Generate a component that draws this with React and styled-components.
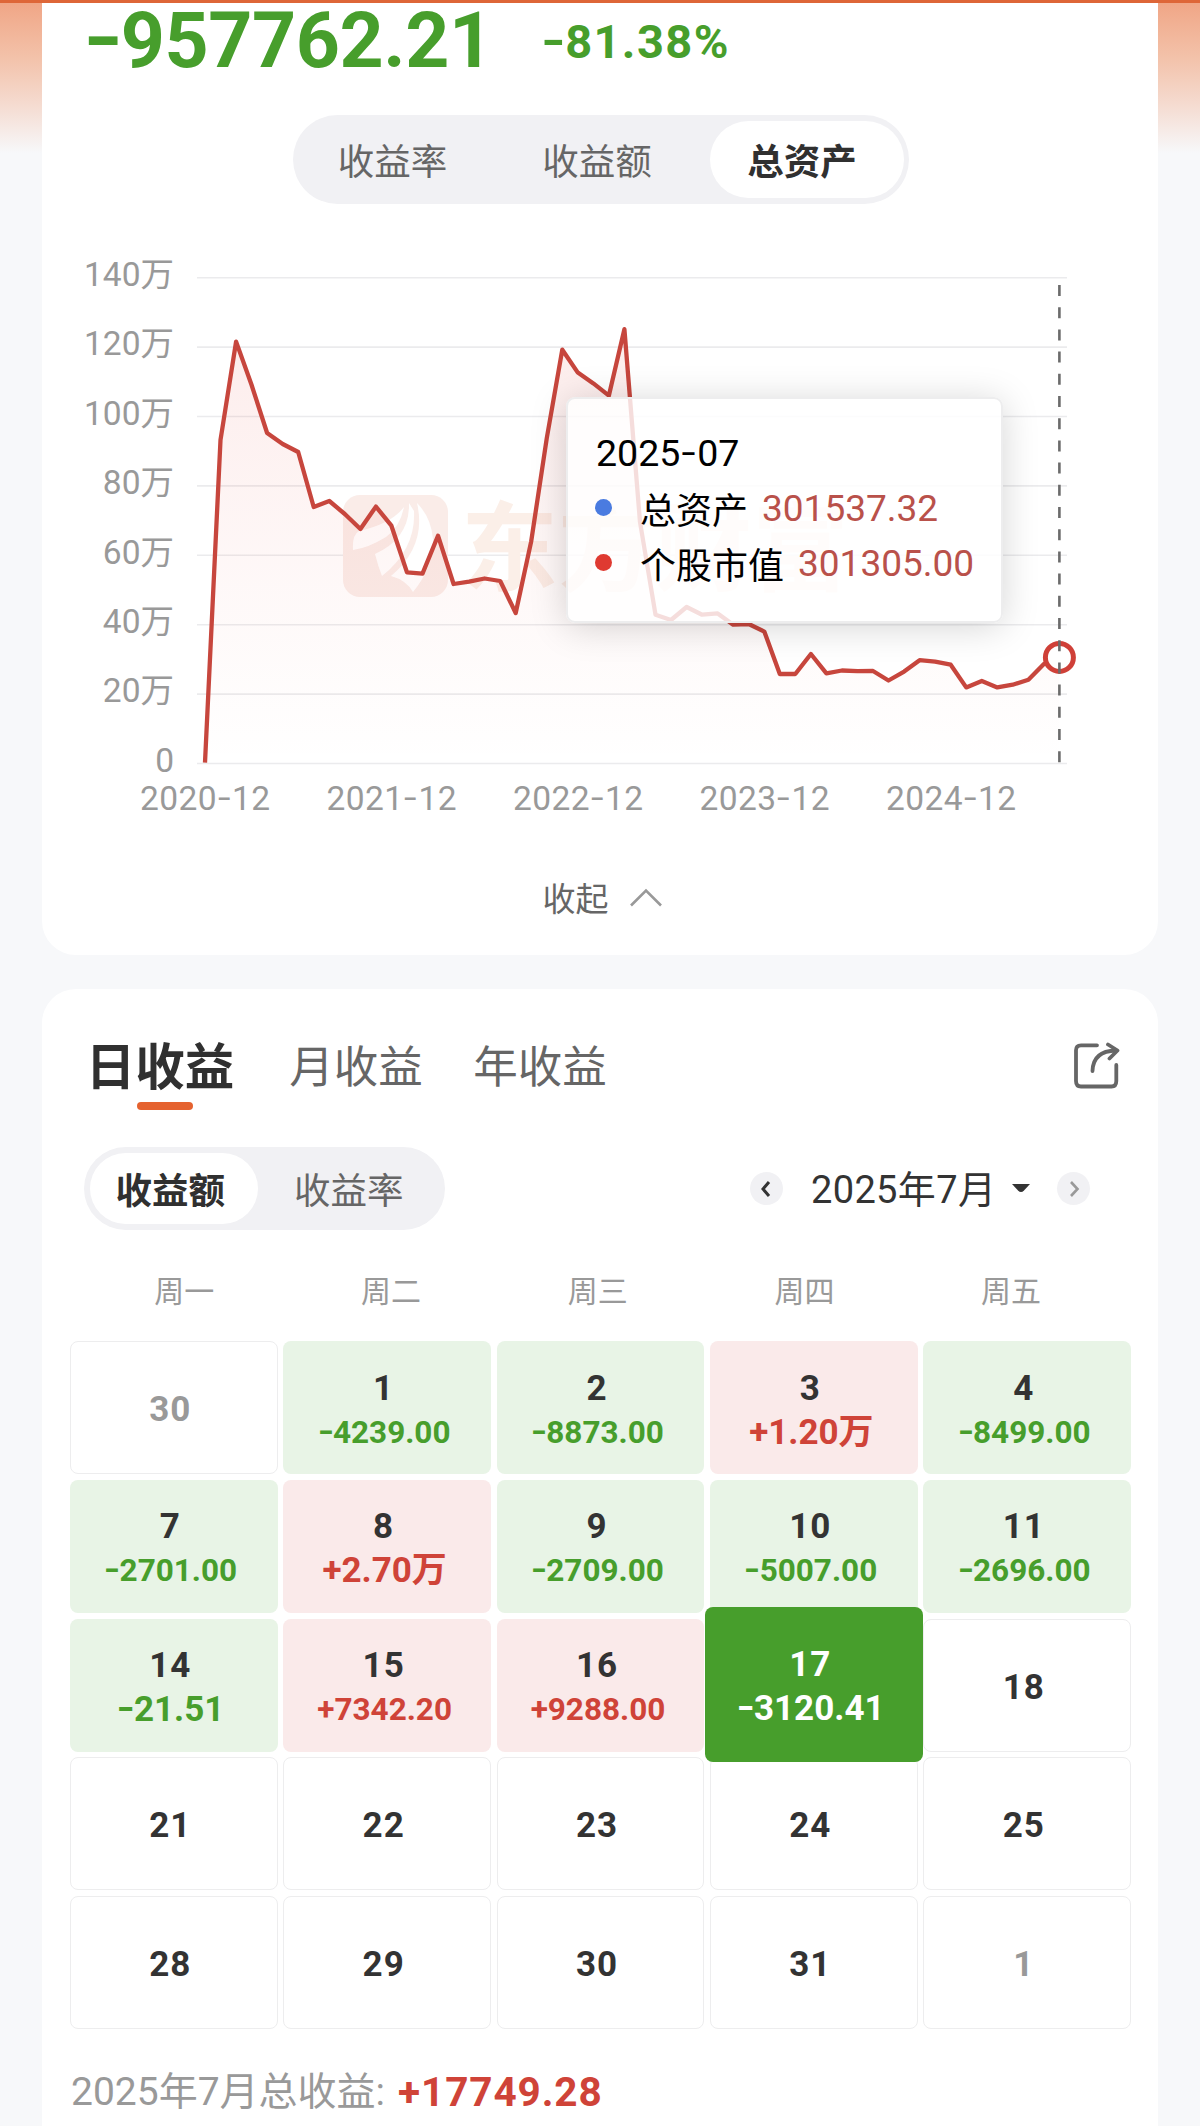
import React from "react";
import styled, { createGlobalStyle } from "styled-components";

const GlobalStyle = createGlobalStyle`
  * { box-sizing: border-box; }
  body {
    margin: 0;
    background: #f7f8fa;
    font-family: Roboto, "Noto Sans CJK SC", sans-serif;
    color: #333;
  }
`;

const GREEN = "#479e2c";
const RED = "#cf4338";

const Page = styled.div`
  display: flex;
  flex-direction: column;
  gap: 34px;
  height: 2126px;
  padding: 0 42px;
  overflow: hidden;
  border-top: 3px solid #de6638;
  background: linear-gradient(#f0a686, #f3c2aa 55px, #f5ddd3 105px, #f7f8fa 150px);
`;

const SummaryCard = styled.section`
  position: relative;
  flex: none;
  display: flex;
  flex-direction: column;
  align-items: center;
  height: 952px;
  background: #fff;
  border-radius: 0 0 34px 34px;
`;

const Totals = styled.div`
  align-self: stretch;
  display: flex;
  height: 76px;
  padding-left: 44px;
  gap: 57px;
  color: ${GREEN};
  font-weight: 700;
  white-space: nowrap;
`;

const TotalAmount = styled.div`
  width: 401px;
  font-size: 77px;
  line-height: 77px;
  letter-spacing: -0.4px;
`;

const TotalRate = styled.div`
  font-size: 47px;
  line-height: 78px;
  letter-spacing: 1.4px;
`;

const DashGlyph = styled.span`
  display: inline-block;
  width: 0.45em;
  text-align: center;
  transform: translateY(-0.02em) scaleX(1.35);
`;

function Num({ children }) {
  return String(children)
    .split(/(-)/)
    .map((part, i) => (part === "-" ? <DashGlyph key={i}>-</DashGlyph> : part));
}

const Segment = styled.div`
  display: flex;
  width: ${(p) => p.$width}px;
  height: ${(p) => p.$height}px;
  padding: 6px 5px 6px 6px;
  background: #f1f1f4;
  border-radius: 50px;
`;

const SegmentItem = styled.div`
  width: ${(p) => p.$width}px;
  display: flex;
  align-items: center;
  justify-content: center;
  padding-right: ${(p) => p.$shift || 0}px;
  padding-bottom: 1px;
  border-radius: 50px;
  font-size: 36.5px;
  color: ${(p) => (p.$active ? "#303030" : "#666")};
  font-weight: ${(p) => (p.$active ? 700 : 400)};
  background: ${(p) => (p.$active ? "#fff" : "transparent")};
`;

const RangeSegment = styled(Segment)`
  margin: 36px 0 0 2px;
`;

const ChartArea = styled.div`
  position: relative;
  flex: none;
  width: 1116px;
  height: 600px;
  margin-top: 37px;
`;

const ChartSvg = styled.svg`
  display: block;
  font-family: Roboto, "Noto Sans CJK SC", sans-serif;
`;

const AxisDates = styled.div`
  display: flex;
  padding-left: 70px;
  margin-top: -1px;
  color: #999;
  font-size: 33.5px;
  letter-spacing: 0.4px;
  line-height: 38px;
`;

const AxisDate = styled.span`
  flex: none;
  width: 186.5px;
  text-align: center;
`;

const Tooltip = styled.div`
  position: absolute;
  left: 524px;
  top: 156px;
  width: 437px;
  height: 226px;
  display: flex;
  flex-direction: column;
  padding: 27px 0 0 28px;
  border: 2px solid #ededee;
  border-radius: 9px;
  background: rgba(255, 255, 255, 0.82);
  box-shadow: 0 4px 36px rgba(0, 0, 0, 0.17);
  color: #000;
  white-space: nowrap;
`;

const TooltipTitle = styled.div`
  font-size: 37.5px;
  line-height: 54px;
`;

const TooltipRow = styled.div`
  display: flex;
  align-items: center;
  height: 55px;
  font-size: 36px;
`;

const Dot = styled.span`
  width: 17px;
  height: 17px;
  margin-left: -1px;
  margin-right: 28px;
  border-radius: 50%;
  background: ${(p) => p.$color};
`;

const TooltipValue = styled.span`
  margin-left: 14px;
  padding-top: 2px;
  font-size: 37px;
  color: #b9514a;
`;

const Collapse = styled.div`
  display: flex;
  align-items: center;
  gap: 20px;
  margin-top: 37px;
  margin-left: 5px;
  font-size: 33px;
  line-height: 44px;
  color: #666;
`;

const CollapseArrow = styled.svg`
  margin-bottom: 4px;
`;

const DailyCard = styled.section`
  flex: none;
  height: 1180px;
  padding: 0 27px 0 28px;
  border-radius: 34px 34px 0 0;
  background: #fff;
`;

const TabBar = styled.div`
  display: flex;
  align-items: flex-start;
  height: 158px;
  padding: 44px 11px 0 18px;
`;

const Tab = styled.div`
  display: flex;
  flex-direction: column;
  align-items: center;
  width: ${(p) => p.$width}px;
  margin-right: ${(p) => p.$gap || 0}px;
  font-size: ${(p) => (p.$active ? 49.5 : 44.5)}px;
  font-weight: ${(p) => (p.$active ? 700 : 400)};
  color: ${(p) => (p.$active ? "#303030" : "#666")};
  line-height: 70px;
  white-space: nowrap;
`;

const TabMark = styled.span`
  width: 56px;
  height: 8px;
  margin-top: -1px;
  margin-left: 10px;
  border-radius: 4px;
  background: #e5622f;
`;

const ShareIcon = styled.svg`
  margin: 5px 0 0 auto;
`;

const Controls = styled.div`
  display: flex;
  justify-content: space-between;
  align-items: center;
  padding: 0 41px 0 14px;
`;

const MonthNav = styled.div`
  display: flex;
  align-items: center;
  color: #333;
  font-size: 38px;
  line-height: 50px;
`;

const RoundButton = styled.span`
  display: flex;
  align-items: center;
  justify-content: center;
  width: 33px;
  height: 33px;
  border-radius: 50%;
  background: #f1f1f4;
  color: ${(p) => p.$color};
`;

const MonthLabel = styled.span`
  width: 184px;
  margin: 0 17px 0 28px;
  padding-top: 2px;
  letter-spacing: 0.35px;
  white-space: nowrap;
`;

const MonthCaret = styled.svg`
  margin-right: 27px;
`;

const Weekdays = styled.div`
  display: grid;
  grid-template-columns: repeat(5, 206.7px);
  height: 111px;
  padding: 44px 0 0 11px;
  color: #999;
  font-size: 30px;
  line-height: 36px;
  text-align: center;
`;

const Calendar = styled.div`
  display: grid;
  grid-template-columns: repeat(5, 1fr);
  grid-auto-rows: 133px;
  gap: 5.8px;
`;

const cellColors = {
  up: { bg: "#faeaea", value: RED },
  down: { bg: "#e8f4e6", value: GREEN },
  picked: { bg: GREEN, value: "#fff" },
};

const Cell = styled.div`
  display: flex;
  flex-direction: column;
  align-items: center;
  justify-content: center;
  padding: 5px 7px 0 0;
  border-radius: 8px;
  font-weight: 700;
  white-space: nowrap;
  background: ${(p) => cellColors[p.$kind]?.bg || "#fff"};
  border: ${(p) => (cellColors[p.$kind] ? "none" : "1.5px solid #ededee")};
  ${(p) => p.$kind === "picked" && "margin: -12px -5.5px -10px; z-index: 1;"}
`;

const Day = styled.span`
  font-size: 35px;
  line-height: 44px;
  letter-spacing: 1px;
  color: ${(p) => (p.$kind === "picked" ? "#fff" : p.$kind === "out" ? "#999" : "#333")};
`;

const Value = styled.span`
  font-size: ${(p) => p.$size}px;
  line-height: 43px;
  padding-left: 2px;
  color: ${(p) => cellColors[p.$kind].value};
`;

const Footer = styled.div`
  display: flex;
  align-items: center;
  gap: 13px;
  margin: 35px 0 0 1px;
  color: #999;
  font-size: 39px;
  line-height: 56px;
  white-space: nowrap;
`;

const FooterTotal = styled.b`
  color: ${RED};
  font-size: 40.5px;
  letter-spacing: 0.9px;
`;

const levels = [
  761.7, 439, 340.6, 384, 432, 443, 451, 506, 500, 513, 528, 505.6, 524.7, 571.4, 572.6,
  534.7, 583, 580.6, 577.5, 580, 612, 540.4, 437, 348.7, 371.6, 382.4, 394.6, 328.2, 521,
  613.7, 619, 606, 613.7, 612.4, 623.7, 623, 630.6, 673, 673, 653, 672.3, 669.5, 670.2, 670,
  679.5, 670.6, 659.2, 660.6, 663.7, 686.4, 680, 686.4, 683.7, 678.8, 663, 656.4,
];
const points = levels.map((y, i) => `${(205 + i * 15.535).toFixed(1)},${y}`).join(" ");
const axis = ["140万", "120万", "100万", "80万", "60万", "40万", "20万", "0"];
const dates = ["2020-12", "2021-12", "2022-12", "2023-12", "2024-12"];

function AssetChart() {
  return (
    <ChartSvg width="1116" height="540" viewBox="42 240 1116 540">
      <defs>
        <linearGradient id="fill" x1="0" y1="0" x2="0" y2="1">
          <stop offset="0" stopColor="#e8443a" stopOpacity="0.1" />
          <stop offset="0.6" stopColor="#e8443a" stopOpacity="0.035" />
          <stop offset="1" stopColor="#e8443a" stopOpacity="0" />
        </linearGradient>
      </defs>
      {axis.map((label, i) => (
        <g key={label}>
          <line x1="197" x2="1067" y1={276.7 + i * 69.4} y2={276.7 + i * 69.4} stroke="#ebebed" strokeWidth="1.6" />
          <text x="174" y={285 + i * 69.4} textAnchor="end" fontSize="33.5" fill="#999">{label}</text>
        </g>
      ))}
      <rect x="343" y="494" width="105" height="102" rx="17" fill="#faece8" />
      <path d="M353 549 Q352 534 359 530 Q391 523 404 506 Q400 526 386 536 Q368 547 353 549Z" fill="#fff" />
      <path d="M409 502 Q410 537 375 553 Q378 565 382 575 Q416 548 414 510Z" fill="#fff" />
      <path d="M417 502 Q427 545 391 575 Q406 579 413 591 Q433 567 433 538 Q431 516 417 502Z" fill="#fff" />
      <text x="461" y="582" fontSize="97" fontWeight="700" fill="#fbefe8">东方财富</text>
      <polygon points={`${points} 1059.4,762 205,762`} fill="url(#fill)" />
      <polyline points={points} fill="none" stroke="#c7463d" strokeWidth="4.3" strokeLinejoin="round" />
      <circle cx="1059.4" cy="656.4" r="14" fill="#fff" stroke="#cf4038" strokeWidth="5" />
      <line x1="1059.4" x2="1059.4" y1="284" y2="762" stroke="#6b6b6b" strokeWidth="2.6" strokeDasharray="11 11.2" />
    </ChartSvg>
  );
}

const weeks = [
  ["30", "out"], ["1", "down", "-4239.00"], ["2", "down", "-8873.00"], ["3", "up", "+1.20万", 35], ["4", "down", "-8499.00"],
  ["7", "down", "-2701.00"], ["8", "up", "+2.70万", 35], ["9", "down", "-2709.00"], ["10", "down", "-5007.00"], ["11", "down", "-2696.00"],
  ["14", "down", "-21.51", 35], ["15", "up", "+7342.20"], ["16", "up", "+9288.00"], ["17", "picked", "-3120.41", 35], ["18", "plain"],
  ["21", "plain"], ["22", "plain"], ["23", "plain"], ["24", "plain"], ["25", "plain"],
  ["28", "plain"], ["29", "plain"], ["30", "plain"], ["31", "plain"], ["1", "out"],
];

export default function App() {
  return (
    <>
      <GlobalStyle />
      <Page>
        <SummaryCard>
          <Totals>
            <TotalAmount><Num>-957762.21</Num></TotalAmount>
            <TotalRate><Num>-81.38%</Num></TotalRate>
          </Totals>
          <RangeSegment $width={616} $height={89}>
            <SegmentItem $width={187}>收益率</SegmentItem>
            <SegmentItem $width={224} $shift={2}>收益额</SegmentItem>
            <SegmentItem $width={194} $shift={10} $active>总资产</SegmentItem>
          </RangeSegment>
          <ChartArea>
            <AssetChart />
            <AxisDates>
              {dates.map((d) => (
                <AxisDate key={d}><Num>{d}</Num></AxisDate>
              ))}
            </AxisDates>
            <Tooltip>
              <TooltipTitle><Num>2025-07</Num></TooltipTitle>
              <TooltipRow>
                <Dot $color="#4a7be0" />总资产<TooltipValue>301537.32</TooltipValue>
              </TooltipRow>
              <TooltipRow>
                <Dot $color="#df3a31" />个股市值<TooltipValue>301305.00</TooltipValue>
              </TooltipRow>
            </Tooltip>
          </ChartArea>
          <Collapse>
            收起
            <CollapseArrow width="34" height="20" viewBox="0 0 34 20" fill="none" stroke="#999" strokeWidth="2.6">
              <path d="M2 17.5 17 2.5 32 17.5" />
            </CollapseArrow>
          </Collapse>
        </SummaryCard>

        <DailyCard>
          <TabBar>
            <Tab $active $width={144} $gap={57}>日收益<TabMark /></Tab>
            <Tab $width={134} $gap={50}>月收益</Tab>
            <Tab $width={134}>年收益</Tab>
            <ShareIcon width="50" height="54" viewBox="1070 1038 50 54" fill="none" stroke="#666" strokeWidth="3.8" strokeLinecap="round" strokeLinejoin="round">
              <path d="M1097 1045.3H1081Q1076 1045.3 1076 1050.3V1081Q1076 1086.5 1081 1086.5H1111.5Q1116.3 1086.5 1116.3 1081V1065" />
              <path d="M1092.5 1071Q1093 1051 1116 1050.5" />
              <path d="M1108 1044.5 1117.5 1050.5 1109.5 1058.5" />
            </ShareIcon>
          </TabBar>
          <Controls>
            <Segment $width={361} $height={83}>
              <SegmentItem $width={169} $shift={7} $active>收益额</SegmentItem>
              <SegmentItem $width={184}>收益率</SegmentItem>
            </Segment>
            <MonthNav>
              <RoundButton $color="#333">
                <svg width="12" height="18" viewBox="0 0 12 18" fill="none" stroke="currentColor" strokeWidth="3"><path d="M8 2 2 9 8 16" /></svg>
              </RoundButton>
              <MonthLabel>2025年7月</MonthLabel>
              <MonthCaret width="18" height="9" viewBox="0 0 18 9"><path d="M0 0H18L12 6.5Q9 9.5 6 6.5Z" fill="#333" /></MonthCaret>
              <RoundButton $color="#999">
                <svg width="12" height="18" viewBox="0 0 12 18" fill="none" stroke="currentColor" strokeWidth="2.6"><path d="M3 2 9.5 9 3 16" /></svg>
              </RoundButton>
            </MonthNav>
          </Controls>
          <Weekdays>
            {["周一", "周二", "周三", "周四", "周五"].map((d) => <span key={d}>{d}</span>)}
          </Weekdays>
          <Calendar>
            {weeks.map(([day, kind, value, size = 31.5], i) => (
              <Cell key={i} $kind={kind}>
                <Day $kind={kind}>{day}</Day>
                {value && <Value $kind={kind} $size={size}><Num>{value}</Num></Value>}
              </Cell>
            ))}
          </Calendar>
          <Footer>
            <span>2025年7月总收益:</span>
            <FooterTotal>+17749.28</FooterTotal>
          </Footer>
        </DailyCard>
      </Page>
    </>
  );
}
